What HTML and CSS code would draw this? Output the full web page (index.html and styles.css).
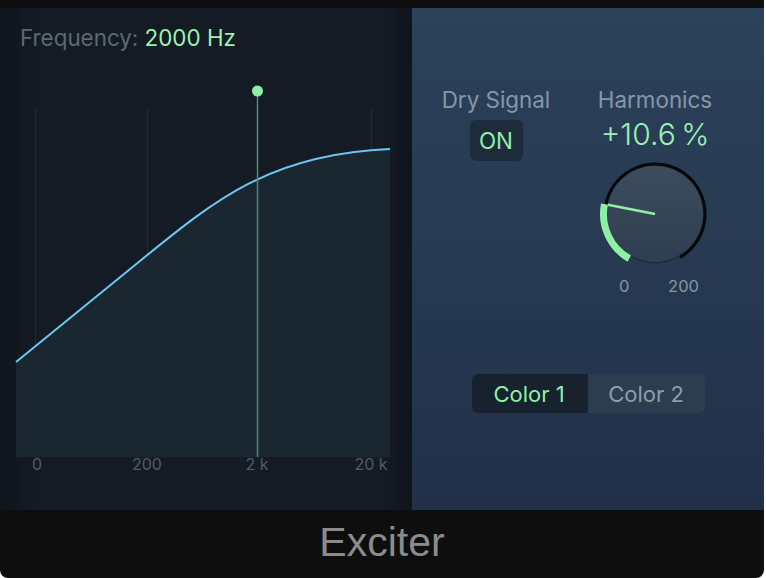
FILE: index.html
```html
<!DOCTYPE html>
<html>
<head>
  <meta charset="UTF-8">
  <title>Exciter</title>
  <link rel="stylesheet" href="styles.css">
</head>
<body>
  <div class="plugin">
    <div class="topbar"></div>

    <div class="main">
      <div class="graph-panel">
        <div class="freq">Frequency: <span class="freq-value">2000 Hz</span></div>
        <svg class="graph" width="412" height="460" viewBox="0 0 412 460">
          <line class="grid" x1="35.5" y1="58" x2="35.5" y2="407"/>
          <line class="grid" x1="147.5" y1="58" x2="147.5" y2="407"/>
          <line class="grid" x1="371.5" y1="58" x2="371.5" y2="407"/>
          <path class="area" d="M16 312 L140 211 C215 150 270 104 390 99 L390 407 L16 407 Z"/>
          <path class="curve" d="M16 312 L140 211 C215 150 270 104 390 99"/>
          <line class="marker" x1="257.5" y1="41" x2="257.5" y2="407"/>
          <circle class="dot" cx="257.5" cy="41" r="5.5"/>
          <text class="axis" x="37" y="420">0</text>
          <text class="axis" x="147" y="420">200</text>
          <text class="axis" x="257" y="420">2 k</text>
          <text class="axis" x="371" y="420">20 k</text>
        </svg>
      </div>

      <div class="ctrl-panel">
        <div class="ctrl-row">
          <div class="ctrl">
            <div class="ctrl-label">Dry Signal</div>
            <button class="toggle">ON</button>
          </div>
          <div class="ctrl">
            <div class="ctrl-label">Harmonics</div>
            <div class="ctrl-value">+10.6&#8201;%</div>
            <svg class="knob" width="130" height="130" viewBox="0 0 130 130">
              <defs>
                <linearGradient id="knobFill" x1="0" y1="0" x2="0" y2="1">
                  <stop offset="0" stop-color="#3c4c5e"/>
                  <stop offset="1" stop-color="#2f3e50"/>
                </linearGradient>
              </defs>
              <circle cx="65" cy="66.5" r="48" fill="#1f2b3a"/>
              <circle cx="65" cy="65" r="48" fill="url(#knobFill)"/>
              <path d="M15.92 55.46 A50 50 0 1 1 90 108.3" fill="none" stroke="#050708" stroke-width="3"/>
              <path d="M39.25 109.6 A51.5 51.5 0 0 1 14.45 55.17" fill="none" stroke="#8ef0a4" stroke-width="7"/>
              <line x1="65" y1="65" x2="17.9" y2="55.8" stroke="#8ef0a4" stroke-width="2.5"/>
            </svg>
            <div class="knob-scale">
              <span>0</span>
              <span>200</span>
            </div>
          </div>
        </div>

        <div class="segment">
          <button class="seg seg-on">Color 1</button>
          <button class="seg">Color 2</button>
        </div>
      </div>
    </div>

    <div class="footer">Exciter</div>
  </div>
</body>
</html>
```

FILE: styles.css
```css
body {
  margin: 0;
  background: #ffffff;
  font-family: Inter, "Liberation Sans", sans-serif;
}
.plugin {
  width: 764px;
  height: 578px;
  display: flex;
  flex-direction: column;
}
.topbar {
  height: 8px;
  background: #0e0e0e;
}
.main {
  display: flex;
  height: 502px;
}
.graph-panel {
  width: 412px;
  background: linear-gradient(90deg, #0f151c 0, #141b25 40px, #141b25 380px, #0f151b 412px);
}
.freq {
  padding: 18px 0 0 20px;
  height: 24px;
  line-height: 24px;
  font-size: 22.4px;
  color: #5b6971;
}
.freq-value {
  color: #9cf2b2;
}
.graph {
  display: block;
}
.grid {
  stroke: #212c38;
  stroke-width: 1;
}
.area {
  fill: #1a2630;
}
.curve {
  fill: none;
  stroke: #6cc7f2;
  stroke-width: 2;
}
.marker {
  stroke: #4f8e6b;
  stroke-width: 1.5;
}
.dot {
  fill: #8ef0a4;
}
.axis {
  fill: #4e5d68;
  font-size: 16px;
  text-anchor: middle;
  font-family: Inter, "Liberation Sans", sans-serif;
}
.ctrl-panel {
  flex: 1;
  background: linear-gradient(180deg, #2b425a 0, #263850 60%, #213048 100%);
  padding-top: 80px;
  display: flex;
  flex-direction: column;
}
.ctrl-row {
  display: grid;
  grid-template-columns: 120px 120px;
  column-gap: 39px;
  padding-left: 24px;
}
.ctrl {
  display: flex;
  flex-direction: column;
  align-items: center;
}
.ctrl-label {
  font-size: 22.4px;
  line-height: 24px;
  color: #8796a6;
  white-space: nowrap;
}
.toggle {
  margin-top: 8px;
  width: 53px;
  height: 41px;
  background: #1d2b3a;
  border: none;
  border-radius: 6px;
  color: #8ef0a4;
  font-family: inherit;
  font-size: 22.4px;
  padding: 0;
}
.ctrl-value {
  margin-top: 5px;
  font-size: 30px;
  line-height: 34px;
  font-weight: 300;
  color: #9cf2b2;
  white-space: nowrap;
}
.knob {
  display: block;
  margin-top: -2px;
}
.knob-scale {
  margin: -2px 0 0 8px;
  width: 80px;
  display: flex;
  justify-content: space-between;
  font-size: 16.5px;
  line-height: 18px;
  color: #8796a6;
}
.segment {
  margin: 79px auto 0;
  display: flex;
  border-radius: 6px;
  overflow: hidden;
}
.seg {
  width: 117px;
  height: 39px;
  border: none;
  padding: 0;
  background: #2c3d50;
  color: #8f9cab;
  font-family: inherit;
  font-size: 22px;
}
.seg-on {
  width: 116px;
  background: #17222e;
  color: #8ef0a4;
  border-right: 1px solid #1a2533;
}
.footer {
  height: 68px;
  background: #0e0e0e;
  border-radius: 0 0 8px 8px;
  text-align: center;
  font-family: "Liberation Sans", Arial, sans-serif;
  font-size: 41px;
  line-height: 64px;
  color: #8c8c8c;
}
```
